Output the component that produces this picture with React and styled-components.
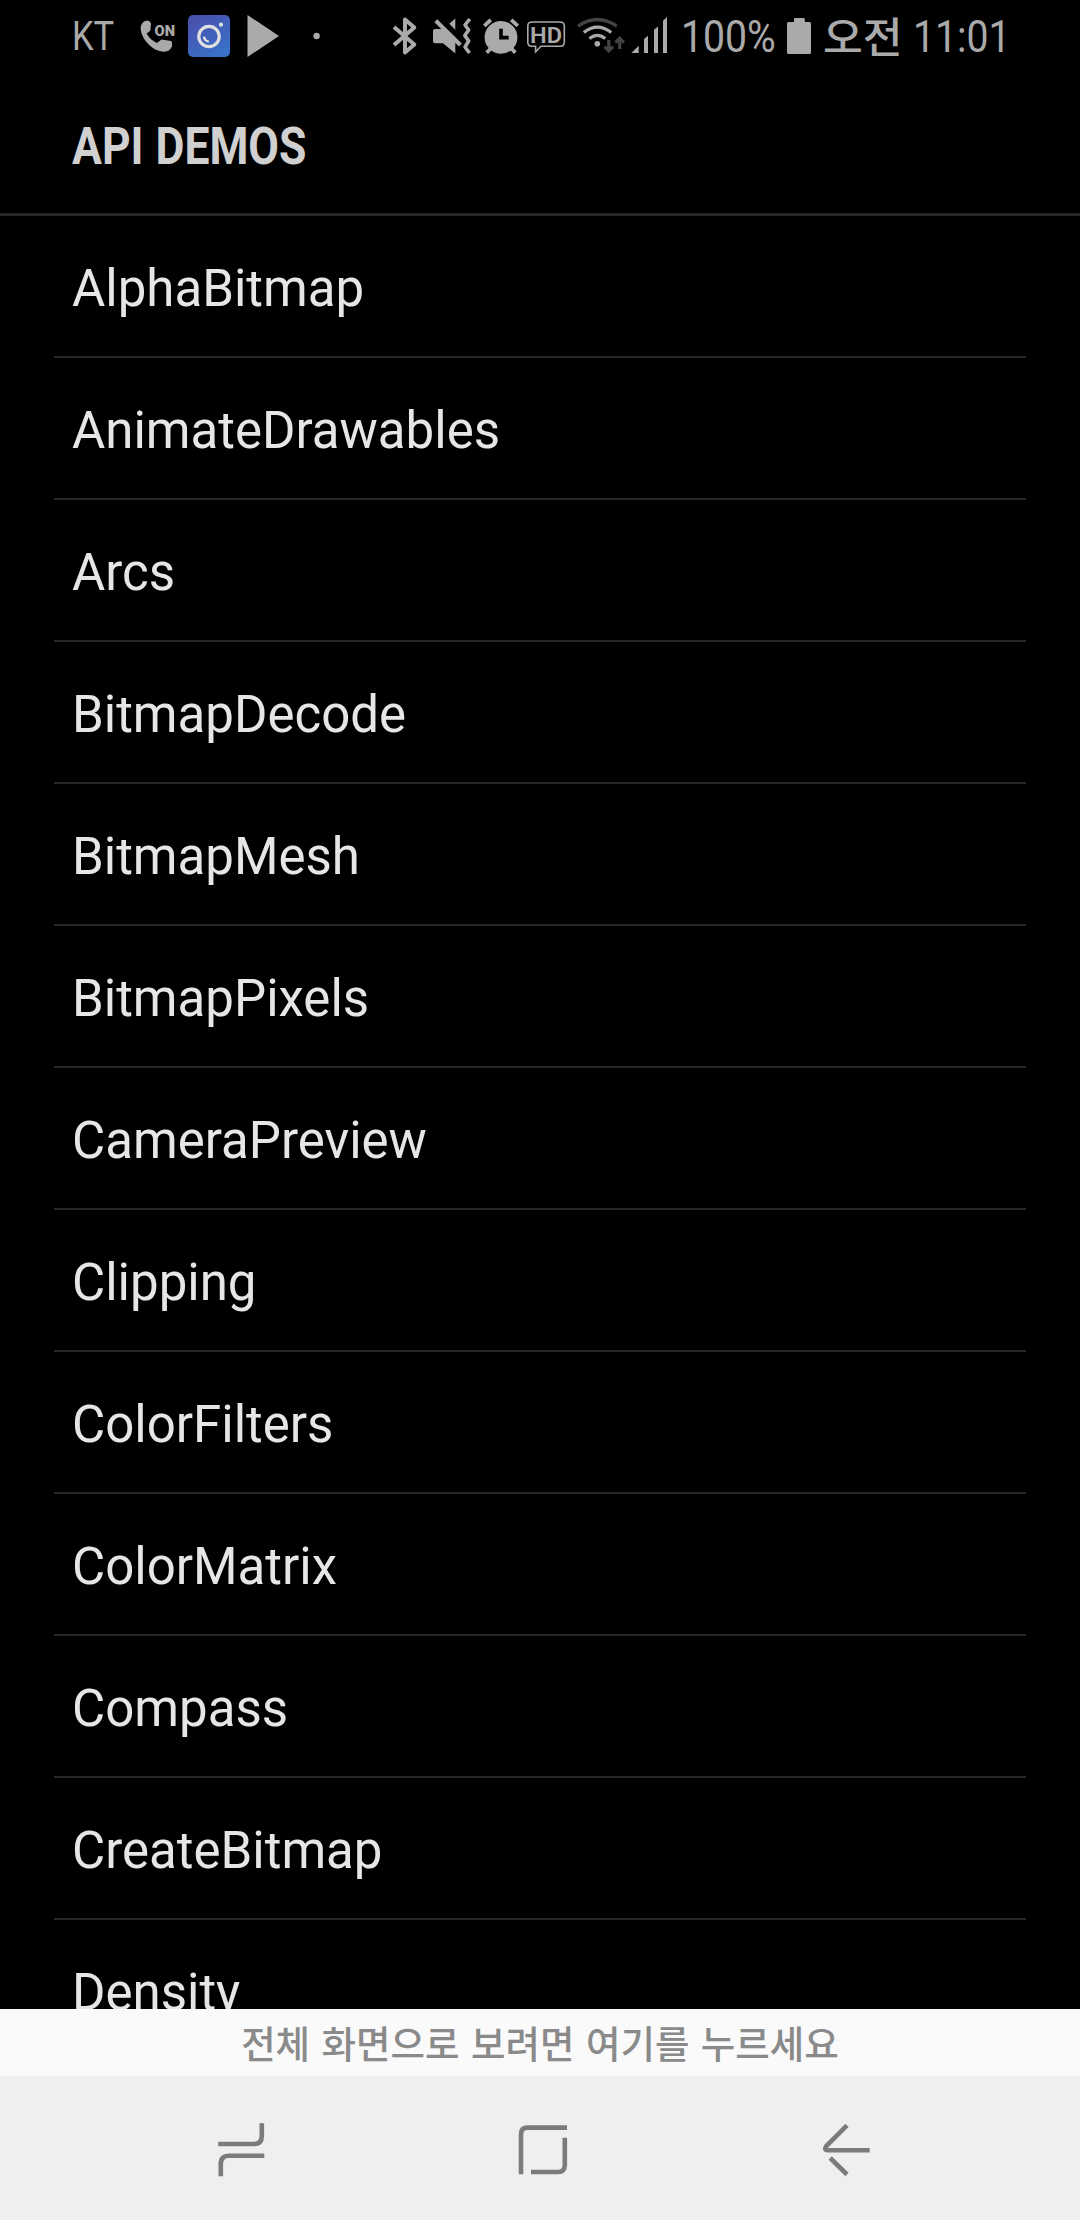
import React from 'react';
import styled, { createGlobalStyle } from 'styled-components';

const GlobalStyle = createGlobalStyle`
  html, body { margin: 0; padding: 0; background: #000; }
  * { box-sizing: border-box; }
`;

const Screen = styled.main`
  display: flex;
  flex-direction: column;
  width: 1080px;
  height: 2220px;
  overflow: hidden;
  background: #000;
  font-family: Roboto, 'Noto Sans CJK KR', sans-serif;
`;

const StatusBar = styled.header`
  display: flex;
  flex: none;
  height: 72px;
  color: #aaa;
`;

const StatusText = styled.span`
  flex: none;
  width: ${(p) => p.$width}px;
  margin-left: ${(p) => p.$gap || 0}px;
  padding-top: ${(p) => p.$top || 0}px;
  font-family: ${(p) => (p.$korean ? "'Noto Sans CJK KR', sans-serif" : 'Roboto, sans-serif')};
  font-size: ${(p) => p.$size}px;
  font-weight: ${(p) => (p.$korean ? 500 : 400)};
  line-height: ${(p) => p.$line || 72}px;
  height: 72px;
  white-space: nowrap;
  transform: scaleX(${(p) => p.$stretch || 1});
  transform-origin: left center;
`;

const StatusIcon = styled.svg`
  flex: none;
  display: block;
  margin-left: ${(p) => p.$gap || 0}px;
`;

const TitleBar = styled.div`
  flex: none;
  height: 144px;
  padding-left: 72px;
  border-bottom: 3px solid #262626;
`;

const Title = styled.h1`
  margin: 0;
  color: #d0d0d0;
  font-size: 51px;
  font-weight: 700;
  line-height: 149px;
  height: 141px;
  white-space: nowrap;
  word-spacing: 1px;
  transform: scaleX(0.872);
  transform-origin: left center;
`;

const List = styled.ul`
  flex: none;
  height: 1793px;
  margin: 0;
  padding: 0 54px;
  overflow: hidden;
  list-style: none;
`;

const Row = styled.li`
  height: 142px;
  padding: 3px 18px 0;
  border-bottom: 2px solid #262626;
  color: #e6e6e6;
  font-size: 51px;
  line-height: 140px;
  white-space: nowrap;
`;

const Hint = styled.div`
  display: flex;
  flex: none;
  justify-content: center;
  height: 67px;
  background: #fafafa;
`;

const HintText = styled.span`
  color: #8a8a8a;
  font-family: 'Noto Sans CJK KR', sans-serif;
  font-size: 37.5px;
  font-weight: 500;
  line-height: 65px;
  word-spacing: 3px;
  white-space: nowrap;
`;

const NavBar = styled.nav`
  display: flex;
  flex: none;
  justify-content: space-between;
  height: 144px;
  padding: 0 181px;
  background: #efefef;
`;

const NavButton = styled.button`
  width: 120px;
  height: 144px;
  margin: 0;
  padding: 0;
  border: 0;
  background: none;
`;

const Icon = ({ x, w, gap, children }) => (
  <StatusIcon $gap={gap} width={w} height={72} viewBox={`${x} 0 ${w} 72`} fill="#aaa">
    {children}
  </StatusIcon>
);

const NavIcon = ({ x, children }) => (
  <NavButton>
    <svg width="120" height="144" viewBox={`${x} 2076 120 144`} fill="none" stroke="#7b7b7b" strokeWidth="4.6">
      {children}
    </svg>
  </NavButton>
);

const items = [
  'AlphaBitmap', 'AnimateDrawables', 'Arcs', 'BitmapDecode', 'BitmapMesh',
  'BitmapPixels', 'CameraPreview', 'Clipping', 'ColorFilters', 'ColorMatrix',
  'Compass', 'CreateBitmap', 'Density',
];

export default function App() {
  return (
    <>
      <GlobalStyle />
      <Screen>
        <StatusBar>
          <StatusText $width={68} $gap={72} $size={41} $stretch={0.84}>KT</StatusText>
          <Icon x={140} w={40}>
            <path d="M140.7 28C140.7 24 144 20.5 147.5 20.5Q149.5 20.5 151 23.5L150.4 30.5 146.7 33.5Q149.5 39.5 157 43L161.5 39.5 171 41Q172.3 41.5 172 46C171 49.5 168 51.7 164 51.7C152 51.7 140.7 38 140.7 28Z" />
            <text x="154.6" y="36.2" fontSize="15.5" fontWeight="900" textLength="20.5" lengthAdjust="spacingAndGlyphs">ON</text>
          </Icon>
          <Icon x={188} w={42} gap={8}>
            <defs>
              <linearGradient id="camera" x1="0" y1="0" x2=".6" y2="1">
                <stop offset="0" stopColor="#4a4da8" />
                <stop offset="1" stopColor="#3970c8" />
              </linearGradient>
            </defs>
            <rect x="188" y="15" width="42" height="42" rx="5" fill="url(#camera)" />
            <circle cx="209" cy="36.5" r="10.2" fill="none" stroke="#e0e0e0" strokeWidth="3.2" />
            <circle cx="221" cy="24.7" r="2.1" fill="#e0e0e0" />
            <path d="M204 36.7Q204.4 41 208.8 41.6" fill="none" stroke="#e0e0e0" strokeWidth="2.3" />
          </Icon>
          <Icon x={246} w={36} gap={16}>
            <path d="M247.5 15 279 36 247.5 57Z" />
          </Icon>
          <Icon x={310} w={14} gap={28}>
            <circle cx="316.6" cy="36" r="3.2" />
          </Icon>
          <Icon x={390} w={30} gap={66}>
            <path d="M394 27 414.3 44.6 405 52.5V19.5L414.3 27.4 394 45" fill="none" stroke="#aaa" strokeWidth="4" strokeLinejoin="round" />
          </Icon>
          <Icon x={430} w={44} gap={10}>
            <path d="M433 31Q433 29 435 29H443L455.3 18.5V53.5L443 43.3H435Q433 43.3 433 41.3Z" />
            <path d="M436 14.9 463.3 42" stroke="#000" strokeWidth="6" />
            <path d="M435.8 20.8 460.4 45" stroke="#aaa" strokeWidth="4" />
            <path d="M469.8 19 465 25 468.7 30 464.8 35.5 468.7 41 465 47 469.5 53" fill="none" stroke="#aaa" strokeWidth="3.6" strokeLinejoin="round" />
          </Icon>
          <Icon x={482} w={40} gap={8}>
            <circle cx="501" cy="37.3" r="16.4" />
            <path d="M484.3 25.8 490.8 19.8M511.2 19.8 517.8 25.8M486.7 52.8 492 47M515.3 52.8 510 47" stroke="#aaa" strokeWidth="3.8" />
            <path d="M501 28.7V37.6H508.7" fill="none" stroke="#000" strokeWidth="3.6" />
          </Icon>
          <Icon x={526} w={40} gap={4}>
            <path d="M532 22H560Q564.3 22 564.3 26V42.2Q564.3 46.3 560 46.3H541L535.6 51.7V46.3H532Q527.8 46.3 527.8 42.2V26Q527.8 22 532 22Z" fill="none" stroke="#aaa" strokeWidth="1.6" />
            <text x="530" y="42.6" fontSize="22.8" fontWeight="600" textLength="32" lengthAdjust="spacingAndGlyphs">HD</text>
          </Icon>
          <Icon x={576} w={52} gap={10}>
            <g fill="none" stroke="#aaa" strokeWidth="3.2">
              <path d="M578 26.2Q597.3 12.8 616.8 26.2" stroke="#444" />
              <path d="M583.8 32.6Q597.3 21.8 611.2 32.6" />
              <path d="M589.5 38.5Q597.3 32.3 605.3 38.5" />
              <path d="M608.8 40V50.5M604.6 46.7 608.8 51 613 46.7M619.7 49V39M615.5 42.7 619.7 38.4 624 42.7" stroke="#444" />
            </g>
            <circle cx="597.3" cy="43.8" r="2.8" />
          </Icon>
          <Icon x={630} w={38} gap={2}>
            <path d="M631.3 53 638.7 45.7V53ZM644 53V39L648 35.7V53ZM654 53V29.7L658 26.5V53ZM663 53V20.7L667 17V53Z" />
          </Icon>
          <StatusText $width={104} $gap={13} $top={1} $size={45} $stretch={0.87}>100%</StatusText>
          <Icon x={785} w={28}>
            <path d="M788.5 22H794V19.3Q794 18 795.3 18H803.5Q804.8 18 804.8 19.3V22H809.5Q811 22 811 23.5V52.5Q811 54 809.5 54H788.5Q787 54 787 52.5V23.5Q787 22 788.5 22Z" />
          </Icon>
          <StatusText $korean $width={90} $gap={10} $size={42} $line={69} $stretch={1.03}>오전</StatusText>
          <StatusText $width={120} $gap={0} $top={1} $size={45} $stretch={0.87}>11:01</StatusText>
        </StatusBar>
        <TitleBar>
          <Title>API DEMOS</Title>
        </TitleBar>
        <List>
          {items.map((name) => <Row key={name}>{name}</Row>)}
        </List>
        <Hint>
          <HintText>전체 화면으로 보려면 여기를 누르세요</HintText>
        </Hint>
        <NavBar>
          <NavIcon x={181}>
            <path d="M218.3 2144H254Q261.8 2144 261.8 2136V2123.3M264.3 2155.8H229Q220.8 2155.8 220.8 2164V2176.3" />
          </NavIcon>
          <NavIcon x={480}>
            <path d="M521 2174.3V2134Q521 2127.6 527.5 2127.6H567M531 2172H558Q564.8 2172 564.8 2165V2137.7" />
          </NavIcon>
          <NavIcon x={779}>
            <path d="M847 2125.3 826.3 2146Q823.5 2150.3 828 2150.3H869.7M830.2 2158 847 2174.5" />
          </NavIcon>
        </NavBar>
      </Screen>
    </>
  );
}
